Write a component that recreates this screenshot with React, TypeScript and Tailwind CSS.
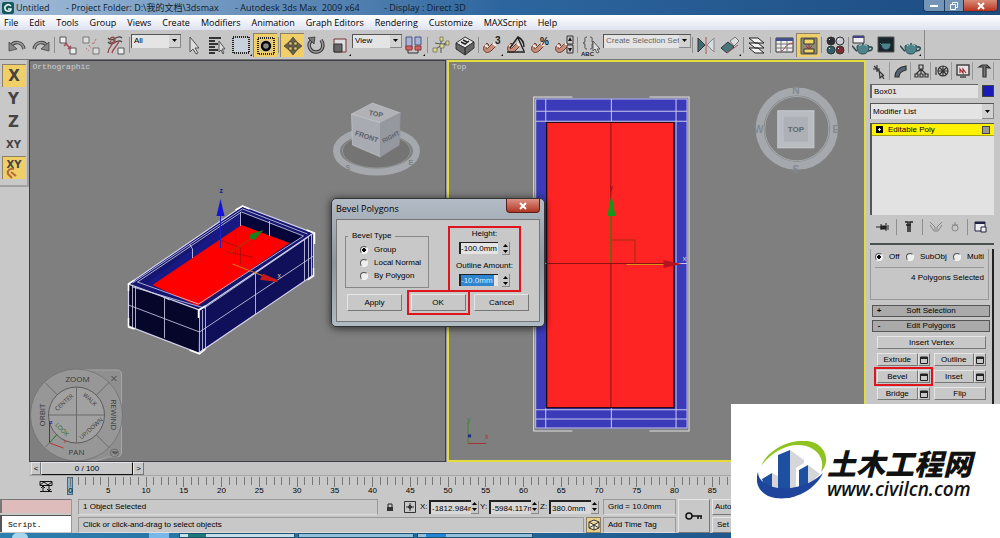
import { useState } from 'react';
import type { ReactNode } from 'react';
import { clsx } from 'clsx';

const menus = [
  'File', 'Edit', 'Tools', 'Group', 'Views', 'Create', 'Modifiers', 'Animation',
  'Graph Editors', 'Rendering', 'Customize', 'MAXScript', 'Help',
];

const Icon = ({ children }: { children: ReactNode }) => (
  <svg viewBox="0 0 24 24" className="block h-6 w-6" fill="none" stroke="#333" strokeWidth="1">
    {children}
  </svg>
);

const Flyout = () => <path d="M23 21v2h-2z" fill="#000" stroke="none" />;

const Magnet = () => (
  <>
    <path d="M5 12c-4 5 1 10 6 6l5-5-3-3-5 5c-2 2-2 0-1-1l2-2-2-2z" fill="#c98d78" stroke="#6d4436" />
    <path d="M13 10l3 3M5 12l3 2" stroke="#eee" strokeWidth="2" />
  </>
);

const Teapot = () => (
  <>
    <path d="M7 13c0 7 3 8 6 8s6-2 6-8c-3-2-9-2-12 0z" fill="#4d8389" stroke="#2b4d54" />
    <path d="M7 18c-2-1-4-5-5-5M19 14c5-1 4 4-1 4" stroke="#2b4d54" strokeWidth="1.6" />
    <path d="M9 13c2-2 6-2 8 0" stroke="#b9dde0" />
    <circle cx="13" cy="11" r="1" fill="#2b4d54" stroke="none" />
  </>
);

const icons: Record<string, ReactNode> = {
  Undo: (
    <>
      <path d="M6 13c3-5 11-5 13 3" stroke="#444" strokeWidth="3.5" />
      <path d="M6 13c3-5 11-5 13 3" stroke="#999" strokeWidth="1.6" />
      <path d="M4 9v9l8-2z" fill="#888" stroke="#444" strokeWidth=".8" />
    </>
  ),
  Redo: (
    <>
      <path d="M18 13c-3-5-11-5-13 3" stroke="#444" strokeWidth="3.5" />
      <path d="M18 13c-3-5-11-5-13 3" stroke="#999" strokeWidth="1.6" />
      <path d="M20 9v9l-8-2z" fill="#888" stroke="#444" strokeWidth=".8" />
    </>
  ),
  'Select and Link': (
    <>
      <path d="M4 4h6v6H4zM14 15h6v6h-6z" fill="#eee" stroke="#555" />
      <path d="M9 10l6 6M8 13l3-3M12 16l3-3" stroke="#a0505c" strokeWidth="1.6" />
    </>
  ),
  'Unlink Selection': (
    <>
      <path d="M3 4h6v6H3zM13 15h6v6h-6z" fill="#ddd" stroke="#777" />
      <path d="M9 12l2 3M12 10l3 1M16 6l-2 4M6 15l3 3" stroke="#b77" strokeDasharray="2 1" />
    </>
  ),
  'Bind to Space Warp': (
    <>
      <path d="M4 5c5 6 9-5 14 0M4 9c5 6 9-5 14 0" stroke="#444" strokeWidth="1.2" />
      <path d="M4 20c0-6 5-7 6-13M8 20c1-5 5-6 7-12M6 6c2-3 5-2 5 1s-4 4-5 1" stroke="#9a4c50" strokeWidth="1.4" />
      <path d="M14 15h6v6h-6z" fill="#eee" stroke="#555" />
    </>
  ),
  'Select Object': <path d="M9 4v15l3-3 3 5 2-1-3-5h4z" fill="#ddd" stroke="#555" />,
  'Select by Name': (
    <>
      <path d="M4 5h12M4 8h6M4 11h9M4 14h6M4 17h9M4 20h6" stroke="#333" strokeWidth="2" />
      <path d="M14 8v11l2-2 2 4 1-1-2-4h3z" fill="#ddd" stroke="#555" />
    </>
  ),
  'Rectangular Selection Region': (
    <>
      <path d="M5 5h14v14H5z" fill="#c9d1dc" stroke="none" />
      <path d="M4 4h16v16H4z" stroke="#222" strokeWidth="2" strokeDasharray="1 1" />
      <Flyout />
    </>
  ),
  'Window Crossing': (
    <>
      <path d="M4 4h16v16H4z" stroke="#222" strokeWidth="2" strokeDasharray="1 1" />
      <path d="M6 6h12v12H6z" fill="#d9c68d" stroke="none" />
      <circle cx="12" cy="12" r="4" fill="#888" stroke="#000" strokeWidth="2.4" />
    </>
  ),
  'Select and Move': (
    <path d="M12 3l4 5h-3v3h3V8l5 4-5 4v-3h-3v3h3l-4 5-4-5h3v-3H8v3l-5-4 5-4v3h3V8H8z" fill="#6c6048" stroke="#333" strokeWidth=".6" />
  ),
  'Select and Rotate': (
    <>
      <path d="M7 8c-4 4-1 11 5 11s9-6 5-12" stroke="#333" strokeWidth="3.5" />
      <path d="M7 8c-4 4-1 11 5 11s9-6 5-12" stroke="#999" strokeWidth="1.6" />
      <path d="M4 5l7-1-1 7z" fill="#777" stroke="#333" strokeWidth=".8" />
    </>
  ),
  'Select and Scale': (
    <>
      <path d="M6 6h12v13H6z" fill="#ddd" stroke="#733" />
      <path d="M6 11h8v8H6z" fill="#666" stroke="#333" />
      <Flyout />
    </>
  ),
  'Use Pivot Point Center': (
    <>
      <path d="M4 4h6v12H4zM13 4h6v8h-6z" fill="#aab4d0" stroke="#44548c" />
      <path d="M4 13h6v4H4zM13 13h6v4h-6z" fill="#c66" stroke="#933" />
      <path d="M6 17v3h10v-3" />
      <Flyout />
    </>
  ),
  'Select and Manipulate': (
    <>
      <path d="M12 4v16M5 17l13-8M6 10l11 2" stroke="#555" />
      <path d="M11 4h3v4h-3zM4 15h4v4H4zM11 11h4v4h-4zM17 8h3v4h-3z" fill="#ded98a" stroke="#554" strokeWidth=".6" />
    </>
  ),
  'Keyboard Shortcut Override': (
    <>
      <path d="M3 10l9-6 9 5-9 6z" fill="#e8e8e8" />
      <path d="M3 10l9 5v7l-9-6zM21 9l-9 6v7l9-7z" fill="#666" />
      <path d="M8 9l4 2 4-3M10 7l4 2" stroke="#222" strokeWidth="1.5" />
    </>
  ),
  'Snaps Toggle': (
    <>
      <Magnet />
      <text x="15" y="11" className="font-['Liberation_Sans'] text-[10px] font-bold" fill="#222" stroke="none">3</text>
      <Flyout />
    </>
  ),
  'Angle Snap': (
    <>
      <Magnet />
      <path d="M3 19h18M14 5l6 13M6 15l8-11c4 2 6 6 6 10" stroke="#222" strokeWidth="1.4" />
    </>
  ),
  'Percent Snap': (
    <>
      <Magnet />
      <text x="12" y="12" className="font-['Liberation_Sans'] text-[10px] font-bold" fill="#222" stroke="none">%</text>
    </>
  ),
  'Spinner Snap': (
    <>
      <Magnet />
      <path d="M15 3h6v8h-6zM15 12h6v8h-6z" fill="#ccc" />
      <path d="M18 4l2 4h-4zM18 19l2-4h-4z" fill="#111" stroke="none" />
    </>
  ),
  'Edit Named Selection Sets': (
    <>
      <path d="M8 4c-3 0-2 2-2 4s-2 2-2 2 2 0 2 2-1 4 2 4M11 4c3 0 2 2 2 4s2 2 2 2-2 0-2 2 1 4-2 4" stroke="#444" />
      <text x="2" y="23" className="font-['Liberation_Sans'] text-[6px] font-bold" fill="#222" stroke="none">ABC</text>
      <path d="M14 8v10l2-2 2 4 2-1-2-3h3z" fill="#ddd" stroke="#555" />
    </>
  ),
  Mirror: (
    <>
      <path d="M4 5v14l7-7z" fill="#3e6e74" />
      <path d="M20 5v14l-7-7z" fill="#d5dde2" stroke="#888" />
      <path d="M12 4v17" stroke="#a55" />
    </>
  ),
  Align: (
    <>
      <path d="M3 15l7-6 6 5-7 6z" fill="#47777d" />
      <path d="M12 8l5-4 4 4-5 5z" fill="#ddd" stroke="#777" />
      <path d="M9 20l11-8" stroke="#a55" />
      <Flyout />
    </>
  ),
  'Layer Manager': (
    <path d="M4 15h9l6 5h-9zM4 10h9l6 5h-9zM4 5h9l6 5h-9z" fill="#f2f2f2" stroke="#222" />
  ),
  'Curve Editor': (
    <>
      <path d="M4 5h17v14H4z" fill="#eee" />
      <path d="M4 5h17v3H4z" fill="#44508c" stroke="none" />
      <path d="M4 11h17M4 15h17M9 8v11M15 8v11" stroke="#777" />
      <path d="M9 18c4 0 4-8 12-8" stroke="#a44" />
    </>
  ),
  'Schematic View': (
    <>
      <path d="M4 4h16v16H4z" fill="#8b8978" stroke="#555" />
      <path d="M7 5h10v5H7zM7 15h10v4H7z" fill="#f1d565" />
      <path d="M12 10v4M9 12l3 3 3-3" stroke="#933" />
    </>
  ),
  'Material Editor': (
    <>
      <circle cx="8" cy="8" r="4" fill="#2c2c34" />
      <circle cx="17" cy="8" r="4" fill="#c6ccd2" />
      <circle cx="8" cy="17" r="4" fill="#31606a" />
      <circle cx="17" cy="17" r="4" fill="#7c2d31" />
      <path d="M6 7l1-1M15 7l1-1M6 16l1-1M15 16l1-1" stroke="#fff" />
    </>
  ),
  'Render Setup': (
    <>
      <Teapot />
      <path d="M3 3h11v7H3z" fill="#eee" />
      <path d="M3 3h11v2H3z" fill="#45418e" stroke="none" />
    </>
  ),
  'Rendered Frame Window': (
    <>
      <path d="M4 4h16v15H4z" fill="#17252c" stroke="#555" />
      <path d="M8 11c0 4 2 5 4 5s4-1 4-5zM6 10l2 2" fill="#4d8389" stroke="#4d8389" />
    </>
  ),
  'Render Production': (
    <>
      <Teapot />
      <Flyout />
    </>
  ),
};

const Tool = ({ name, active }: { name: string; active?: boolean }) => (
  <button
    aria-label={name}
    className={clsx('h-6 w-6 shrink-0', active && 'border-l border-t border-[#8c8166] bg-[#f0cf68]')}
  >
    <Icon>{icons[name]}</Icon>
  </button>
);

const Sep = () => <div className="mx-px h-4 w-px shrink-0 bg-[#8e8e8e]" />;

const Dropdown = ({ label, value, className }: { label: string; value: string; className: string }) => (
  <div className={clsx('relative shrink-0 border-l border-t border-[#555] bg-[#e4e4e4]', className)}>
    <select aria-label={label} className="block h-full w-full appearance-none pl-0.5 leading-none outline-none">
      <option>{value}</option>
    </select>
    <span className="pointer-events-none absolute inset-y-0 right-0 flex w-3 items-center justify-center border-b border-r border-[#888] bg-[#d2d2d2]">
      <svg viewBox="0 0 5 3" className="h-[3px] w-[5px]"><path d="M0 0h5L2.500 3z" /></svg>
    </span>
  </div>
);

const Spinner = ({ label }: { label: string }) => (
  <span className="flex w-2 shrink-0 flex-col border-b border-r border-[#888]">
    <button aria-label={`Increase ${label}`} className="flex h-1.5 items-center justify-center">
      <svg viewBox="0 0 5 3" className="h-[3px] w-[5px]"><path d="M0 3h5L2.500 0z" /></svg>
    </button>
    <button aria-label={`Decrease ${label}`} className="flex h-1.5 items-center justify-center">
      <svg viewBox="0 0 5 3" className="h-[3px] w-[5px]"><path d="M0 0h5L2.500 3z" /></svg>
    </button>
  </span>
);

const Radio = ({ name, label, checked, onChange }: { name: string; label: string; checked: boolean; onChange: () => void }) => (
  <label className="flex items-center gap-1.5 whitespace-nowrap">
    <input
      type="radio"
      name={name}
      checked={checked}
      onChange={onChange}
      className="h-2 w-2 shrink-0 appearance-none rounded-full border border-[#f4f4f4] border-l-[#555] border-t-[#555] bg-[#eee] checked:bg-radial checked:from-black checked:from-40% checked:to-[#eee] checked:to-50%"
    />
    {label}
  </label>
);

const PushButton = ({ children, className }: { children: ReactNode; className?: string }) => (
  <button className={clsx('border border-[#e6e6e6] border-b-[#777] border-r-[#777] bg-[#c8c8c8] text-center', className)}>
    {children}
  </button>
);

const TitleBar = () => (
  <header className="flex h-[15px] shrink-0 items-center bg-linear-to-r from-[#a3bdd8] via-[#2d669e] via-50% to-[#1c4c82] font-['Open_Sans','Noto_Sans_CJK_SC',sans-serif] text-[9px] text-[#10202e]">
    <svg viewBox="0 0 12 12" className="ml-0.5 h-3 w-3">
      <rect width="12" height="12" rx="2" fill="#17565a" />
      <path d="M9 4C6 1 2 4 3 7s6 3 6 0H6" fill="none" stroke="#e4f4f2" strokeWidth="1.6" />
    </svg>
    <h1 className="flex grow items-center whitespace-pre">
      <span className="ml-0.5 w-[50px]">Untitled</span>
      <span className="w-[169px]">- Project Folder: D:\我的文档\3dsmax</span>
      <span className="w-[149px]">- Autodesk 3ds Max  2009 x64</span>
      <span>- Display : Direct 3D</span>
    </h1>
    <div className="mr-0.5 flex h-3 self-start overflow-hidden rounded-b-sm border border-t-0 border-[#1b3a5c] text-white">
      <button aria-label="Minimize" className="flex w-[21px] items-center justify-center border-r border-[#1b3a5c] bg-[#7595b7]">
        <span className="h-0.5 w-2 bg-white" />
      </button>
      <button aria-label="Restore" className="flex w-[19px] items-center justify-center border-r border-[#1b3a5c] bg-[#7595b7]">
        <svg viewBox="0 0 8 8" className="h-2 w-2" fill="none" stroke="#fff"><path d="M.5 2.500h5v5h-5zM2.500 2V.5h5v5H6" /></svg>
      </button>
      <button aria-label="Close" className="flex w-[33px] items-center justify-center bg-linear-to-b from-[#d98a78] to-[#b5301b]">
        <svg viewBox="0 0 8 8" className="h-2 w-2" stroke="#fff" strokeWidth="2"><path d="M1 1l6 6M7 1L1 7" /></svg>
      </button>
    </div>
  </header>
);

const MainToolbar = () => (
  <div className="flex h-[30px] shrink-0 items-center border-b border-[#777] bg-[#c6c6c6] pl-[5px]">
    <Tool name="Undo" />
    <Tool name="Redo" />
    <Sep />
    <Tool name="Select and Link" />
    <Tool name="Unlink Selection" />
    <Tool name="Bind to Space Warp" />
    <Sep />
    <Dropdown label="Selection filter" value="All" className="mb-2 h-[14px] w-[50px]" />
    <Tool name="Select Object" />
    <Tool name="Select by Name" />
    <Tool name="Rectangular Selection Region" />
    <Tool name="Window Crossing" active />
    <Sep />
    <Tool name="Select and Move" active />
    <Tool name="Select and Rotate" />
    <Tool name="Select and Scale" />
    <Dropdown label="Reference coordinate system" value="View" className="mb-2 h-[14px] w-[50px]" />
    <Tool name="Use Pivot Point Center" />
    <Sep />
    <Tool name="Select and Manipulate" />
    <Tool name="Keyboard Shortcut Override" />
    <Sep />
    <Tool name="Snaps Toggle" />
    <Tool name="Angle Snap" />
    <Tool name="Percent Snap" />
    <Tool name="Spinner Snap" />
    <Sep />
    <Tool name="Edit Named Selection Sets" />
    <Dropdown label="Named selection sets" value="Create Selection Set" className="mb-2 h-[14px] w-[88px] text-[#666]" />
    <Sep />
    <Tool name="Mirror" />
    <Tool name="Align" />
    <Sep />
    <Tool name="Layer Manager" />
    <Sep />
    <Tool name="Curve Editor" />
    <Tool name="Schematic View" active />
    <Sep />
    <Tool name="Material Editor" />
    <Sep />
    <Tool name="Render Setup" />
    <Tool name="Rendered Frame Window" />
    <Tool name="Render Production" />
    <div className="ml-0.5 h-full w-px bg-[#888]" />
  </div>
);

const AxisToolbar = () => (
  <aside className="w-[29px] shrink-0 bg-[#c8c8c8]">
    <div className="flex flex-col items-center gap-px border-b-2 border-r-2 border-[#a2a2a2] pb-1.5 pt-1 font-['DejaVu_Sans'] font-bold text-[#444]">
      <button className="h-[23px] w-6 border-l border-t border-[#8c8166] bg-[#f0cf68] text-[15px] leading-none">X</button>
      <button className="h-[22px] w-6 text-[15px] leading-none">Y</button>
      <button className="h-[22px] w-6 text-[15px] leading-none">Z</button>
      <button className="h-[21px] w-6 text-[10px] leading-none">XY</button>
      <button className="relative h-[23px] w-6 border-l border-t border-[#8c8166] bg-[#f0cf68] pb-1.5 text-[10px] leading-none">
        XY
        <svg viewBox="0 0 12 12" className="absolute bottom-0 left-0.5 h-3 w-3">
          <path d="M9 2C4 1 2 4 3 7l4 4M6 5l5 4" fill="none" stroke="#b06a3c" strokeWidth="2" />
        </svg>
      </button>
    </div>
  </aside>
);

// Tray seen from the front left, with the view cube and the steering wheel around it
const OrthoScene = () => (
  <svg viewBox="30 61 416 400" preserveAspectRatio="xMidYMid slice" className="block h-full w-full" fill="none">
    <text x="33" y="69" fill="#cfcfcf" className="font-['Liberation_Mono'] text-[8px]">Orthographic</text>

    <path d="M129 284L200 310 199 353 129 326z" fill="#06062a" />
    <path d="M200 310L314 233V275L199 353z" fill="#10105a" />
    <path d="M129 284L243 206 314 233 200 310z" fill="#161670" />
    <path d="M147 284L241 212V226L154 286z" fill="#191984" />
    <path d="M241 212L304 236 290 244 241 226z" fill="#05053a" />
    <path d="M153 285L242 225 290 243 198 306z" fill="#fe0000" />
    <g stroke="#d4d4ee" strokeWidth=".8">
      <path d="M129 284L243 206 314 233 200 310zM129 284V326L199 353 314 275V233" strokeWidth="1.2" />
      <path d="M133 283L243 209 308 234M138 282L242 212 304 236 199 304zM133 287L205 308 309 237" />
      <path d="M129 305L200 332 314 256M165 298V338M256 273V314M133 286V328M136 287V329" />
      <path d="M200 310V353M203 310V350M206 307V348M305 239V281M309 236V278M312 235V276" />
      <path d="M241 212V226M190 244L193 249V258M270 221V236M162 296L170 300" />
    </g>
    <path d="M129 291V284L135 280M129 318V327L135 329M190 350L200 354 206 349M314 268V276L308 280M236 210L243 206 250 209M307 230L315 233V244M199 318V310L206 306" stroke="#fff" strokeWidth="1.500" />
    <path d="M221 240L241 248V264M228 252L253 257M236 262V228" stroke="#a01010" strokeWidth=".8" />
    <path d="M221 248V214" stroke="#2020c8" />
    <path d="M221 199L217 216H225z" fill="#1414d8" />
    <text x="220" y="193" fill="#1a1a90" className="font-['Liberation_Sans'] text-[7px] font-bold">z</text>
    <path d="M230 253L254 237" stroke="#a04010" />
    <path d="M264 230L251 234 250 238 255 240z" fill="#18801c" />
    <path d="M233 264L264 276" stroke="#e07818" />
    <path d="M278 281L264 275 262 279z" fill="#c81818" stroke="#c81818" strokeWidth="2" />
    <text x="278" y="278" fill="#ccc" className="font-['Liberation_Sans'] text-[7px]">x</text>

    <ellipse cx="377" cy="151" rx="40" ry="21" stroke="#a5a9ad" strokeWidth="7" />
    <ellipse cx="377" cy="151" rx="34" ry="17" fill="#747474" stroke="#9a9a9a" strokeWidth=".8" />
    <path d="M352 114L373 103 401 113 381 123z" fill="#b0b2b8" stroke="#c8cad0" strokeWidth=".6" />
    <path d="M352 114L381 123V157L353 145z" fill="#a9abb2" stroke="#c8cad0" strokeWidth=".6" />
    <path d="M381 123L401 113 400 145 381 157z" fill="#9698a0" stroke="#8a8c94" strokeWidth=".6" />
    <g fill="#5c6068" className="font-['Liberation_Sans'] text-[7px] font-bold">
      <text transform="translate(369 115) rotate(10)">TOP</text>
      <text transform="translate(355 135) rotate(18)">FRONT</text>
      <text transform="translate(384 143) rotate(-28)" className="text-[6px]">RIGHT</text>
      <text x="346" y="170" fill="#7c8288">S</text>
      <text x="409" y="165" fill="#7c8288">E</text>
    </g>

    <path d="M77 370H118Q122 370 122 375V452Q122 457 117 457H109Q94 463 77 461A46 46 0 0 1 77 370z" fill="#8f8f8f" stroke="#a6a6a6" />
    <circle cx="77" cy="415" r="46" fill="#979797" stroke="#666" strokeWidth=".6" />
    <circle cx="77" cy="415" r="28" fill="#a1a1a1" stroke="#5c5c5c" />
    <path d="M77 387V443M49 415H105M46 383L58 395M110 382L97 395M110 448L97 435M46 447L57 435" stroke="#6a6a6a" />
    <path d="M112 376l5 5M117 376l-5 5M113 452h5l-2 2z" stroke="#333" strokeWidth=".8" />
    <circle cx="115" cy="453" r="4" stroke="#555" strokeWidth=".6" />
    <g fill="#383838" className="font-['Open_Sans'] text-[8px]" textAnchor="middle">
      <text x="78" y="382">ZOOM</text>
      <text x="77" y="455">PAN</text>
      <text transform="translate(45 415) rotate(-90)">ORBIT</text>
      <text transform="translate(111 415) rotate(90)">REWIND</text>
      <text transform="translate(66 404) rotate(-42)" className="text-[6px]">CENTER</text>
      <text transform="translate(89 401) rotate(42)" className="text-[6px]">WALK</text>
      <text transform="translate(61 431) rotate(45)" fill="#1d6a20" className="text-[6px]">LOOK</text>
      <text transform="translate(93 430) rotate(-42)" className="text-[6px]">UP/DOWN</text>
    </g>
    <path d="M50 443V421" stroke="#3434b0" />
    <path d="M50 443L58 434" stroke="#2c8a2c" />
    <path d="M50 443L64 448" stroke="#b83434" />
    <text x="50" y="424" fill="#2424a0" className="font-['Liberation_Sans'] text-[6px] font-bold">z</text>
    <text x="64" y="443" fill="#b83434" className="font-['Liberation_Sans'] text-[6px]">x</text>
  </svg>
);

const TopScene = () => (
  <svg viewBox="450 62 414 398" preserveAspectRatio="xMidYMid slice" className="block h-full w-full" fill="none">
    <text x="453" y="69" fill="#cfcfcf" className="font-['Liberation_Mono'] text-[8px]">Top</text>

    <path d="M536 99H688V428H536z" fill="#3b3bba" />
    <path d="M547.500 122.500H674.500V407.500H547.500z" fill="#ff2424" stroke="#000" />
    <path d="M536.500 99.500H687.500V427.500H536.500zM536 111.500H688M536 121.500H688M536 409.500H688M536 418.500H688M546.500 99V122M546.500 408V428M676.500 99V428M612 99V122M612 408V428M536 263.500H547M676 263.500H688" stroke="#c8c8ec" />
    <path d="M573 97.500H534.500V430.500H573M650 97.500H689.500V430.500H650" stroke="#e2e2e2" />
    <path d="M611.500 123V407M548 263.500H674" stroke="#8e1014" />
    <path d="M611.500 240H635.500V263" stroke="#a02a10" />
    <path d="M611.500 263V215" stroke="#5a8a14" />
    <path d="M612 195L608 216H616z" fill="#0e9a18" />
    <text x="610" y="190" fill="#8e1014" className="font-['Liberation_Sans'] text-[7px]">y</text>
    <path d="M627 264.500H665" stroke="#e09018" />
    <path d="M682 264L664 260V268z" fill="#b81420" />
    <text x="683" y="261" fill="#ccc" className="font-['Liberation_Sans'] text-[8px]">x</text>

    <circle cx="797" cy="129" r="37" stroke="#a5a9ad" strokeWidth="8" />
    <circle cx="797" cy="129" r="32" stroke="#a5a9ad" />
    <path d="M778 111H814V148H778z" fill="#b9bcc0" stroke="#c9ccd0" />
    <path d="M784 117H808V142H784z" fill="#adb0b4" />
    <g className="font-['Liberation_Sans'] text-[10px] font-bold" fill="#84888e" textAnchor="middle">
      <text x="796" y="94">N</text>
      <text x="796" y="173">S</text>
      <text x="759" y="133">W</text>
      <text x="836" y="133">E</text>
      <text x="796" y="132" fill="#62666c" className="text-[8px]">TOP</text>
    </g>

    <path d="M469 443V422" stroke="#3a8a3a" />
    <path d="M469 443H487" stroke="#a03434" />
    <path d="M469 434h3v3h-3z" fill="#1c2c80" />
    <text x="468" y="422" fill="#2c8a2c" className="font-['Liberation_Sans'] text-[7px]">y</text>
    <text x="486" y="439" fill="#a83434" className="font-['Liberation_Sans'] text-[7px]">x</text>
  </svg>
);

const TimeSlider = () => (
  <div className="flex h-[14px] shrink-0 border-b border-[#a8a8a8] bg-[#c4c4c4] pl-0.5">
    <PushButton className="w-[10px] leading-none">&lt;</PushButton>
    <button className="w-[92px] border border-[#e6e6e6] border-b-[#111] border-r-[#111] bg-[#c8c8c8] leading-none">0 / 100</button>
    <PushButton className="w-[11px] leading-none">&gt;</PushButton>
  </div>
);

const TrackBar = () => (
  <div className="flex h-[21px] shrink-0 bg-[#c8c8c8] pr-[41px]">
    <div className="flex w-[38px] shrink-0 items-center pl-2.5">
      <button aria-label="Open mini curve editor">
        <svg viewBox="0 0 14 13" className="h-[13px] w-[14px]" fill="none" stroke="#111">
          <path d="M1 1.500h12v4H1zM1 5l4-3 4 3 4-3M1 11.500h12M4 6v5M10 6v5M2 8l2-2 2 2M8 9l2 2 2-2" />
        </svg>
      </button>
    </div>
    <div className="flex grow">
      <div className="-mr-[3px] mt-px h-[18px] w-[6px] shrink-0 border border-[#3e6a85] bg-[#86b1ca]" />
      {Array.from({ length: 20 }, (_, i) => (
        <div key={i} className="flex grow basis-0 flex-col pt-px">
          <div className="flex h-2.5">
            {[0, 1, 2, 3, 4].map((t) => (
              <div key={t} className={clsx('grow basis-0 border-l border-[#777]', t === 0 ? 'h-2.5' : 'h-2')} />
            ))}
          </div>
          <div className="-mt-px flex w-px justify-center leading-[10px]">{i * 5}</div>
        </div>
      ))}
    </div>
  </div>
);

const tabIcons: [string, string][] = [
  ['Create', 'M3 3l10 10M6 2v7M2 6h7M8 7l1 8 2-2 2 3'],
  ['Modify', 'M3 14c0-7 4-10 11-11v4c-5 1-7 3-7 7z'],
  ['Hierarchy', 'M6 2h4v4H6zM2 11h3v3H2zM7 11h3v3H7zM12 11h3v3h-3zM8 6v5M3 11l5-5 5 5'],
  ['Motion', 'M2 4v8M14 8a5 5 0 1 1-10 0 5 5 0 0 1 10 0M6 5l6 6M12 5l-6 6M9 3v10M4 8h10'],
  ['Display', 'M5 10V6l3 4V6l3 4'],
  ['Utilities', 'M3 4l3-2h5l3 3h-2l-2-1v10H7V4z'],
];

const EditButton = ({ name, settings = true, marked }: { name: string; settings?: boolean; marked?: boolean }) => (
  <div className={clsx('flex h-[13px]', marked && 'outline-2 outline-offset-1 outline-[#e0141c]')}>
    <PushButton className="grow leading-none">{name}</PushButton>
    {settings && (
      <PushButton className="flex w-3 items-center justify-center">
        <svg viewBox="0 0 8 8" role="img" aria-label={`${name} settings`} className="h-2 w-2">
          <path d="M.5 1h7v6.500h-7z" fill="none" stroke="#222" />
          <path d="M0 1h8v2H0z" fill="#222" />
        </svg>
      </PushButton>
    )}
  </div>
);

const CommandPanel = () => {
  const [preview, setPreview] = useState('Off');

  return (
    <aside className="flex w-[134px] shrink-0 flex-col bg-[#c6c6c6] pl-1 pr-1.5">
      <div className="flex h-5 items-end gap-px">
        {tabIcons.map(([name, d]) => (
          <button key={name} aria-label={name} className="flex h-[18px] grow items-center justify-center border-r border-[#999]">
            <svg viewBox="0 0 16 16" className="h-4 w-4" fill={name === 'Modify' ? '#567' : name === 'Utilities' ? '#777' : 'none'} stroke={name === 'Display' ? '#a82a34' : '#333'} strokeWidth="1.200">
              {name === 'Display' && <path d="M2 2h12v10H2zM5 14h6" fill="#e4e4e4" stroke="#444" strokeWidth="1.500" />}
              <path d={d} />
            </svg>
          </button>
        ))}
      </div>
      <div className="mt-1 flex items-center gap-1">
        <input aria-label="Object name" defaultValue="Box01" className="h-[14px] w-0 grow border-l-2 border-t border-[#666] bg-[#e2e2e2] px-0.5" />
        <button aria-label="Object color" className="h-3 w-3 border border-[#444] bg-[#1a1ab4]" />
      </div>
      <Dropdown label="Modifier List" value="Modifier List" className="mt-[5px] h-4 w-full" />
      <ul className="mt-1 h-[92px] border-l-2 border-t border-[#555] bg-[#e2e2e2]">
        <li className="flex h-3 items-center border-b border-[#a8a400] bg-[#fff200] px-1">
          <svg viewBox="0 0 7 7" className="mr-[5px] h-[7px] w-[7px]"><path d="M0 0h7v7H0z" /><path d="M2 3.500h3M3.500 2v3" stroke="#fff" /></svg>
          <span className="grow">Editable Poly</span>
          <span className="h-2 w-2 border border-[#444] bg-[#999]" />
        </li>
      </ul>
      <div className="mt-0.5 flex h-5 items-center justify-between px-1.5">
        <svg viewBox="0 0 14 12" className="h-3 w-3.5" stroke="#222" fill="#222"><path d="M0 6h5M5 3v6M5 5h5v3H5zM10 2v8M12 4v5" /></svg>
        <Sep />
        <svg viewBox="0 0 14 12" className="h-3 w-3.5" stroke="#222" fill="none"><path d="M3 1h3v10M4 4h5M11 1H8v10" strokeWidth="1.500" /></svg>
        <Sep />
        <svg viewBox="0 0 14 12" className="h-3 w-3.5" stroke="#888" fill="none"><path d="M1 1l5 5v5M13 1L8 6v5M1 4l4 6M13 4l-4 6" /></svg>
        <svg viewBox="0 0 14 12" className="h-3 w-3.5" stroke="#888" fill="none"><path d="M4 7a3 3 0 1 0 6 0 3 3 0 1 0-6 0M4 4h6M7 1v3" /></svg>
        <Sep />
        <svg viewBox="0 0 14 12" className="h-3 w-3.5" stroke="#224" fill="#eee"><path d="M1 1h10v9H1z" /><path d="M1 2h10" strokeWidth="2" /><path d="M7 6h5v5H7z" /></svg>
      </div>
      <hr className="mt-[6px] border-t-2 border-[#48504c]" />
      <div className="mt-1 flex grow gap-0.5">
        <div className="flex grow flex-col">
          <div className="mr-px flex h-[51px] flex-col items-end border border-t-0 border-[#999] px-1">
            <div className="flex w-full justify-between border-b border-[#999] pb-1 pt-0.5">
              <Radio name="preview" label="Off" checked={preview === 'Off'} onChange={() => setPreview('Off')} />
              <Radio name="preview" label="SubObj" checked={preview === 'SubObj'} onChange={() => setPreview('SubObj')} />
              <Radio name="preview" label="Multi" checked={preview === 'Multi'} onChange={() => setPreview('Multi')} />
            </div>
            <p className="mt-1">4 Polygons Selected</p>
          </div>
          <button className="ml-0.5 mt-[5px] flex h-3 items-center border border-[#555] bg-[#aaa]">
            <span className="w-3 font-bold">+</span>
            <span className="grow pr-3">Soft Selection</span>
          </button>
          <button className="ml-0.5 mt-[3px] flex h-3 items-center border border-[#555] bg-[#aaa]">
            <span className="w-3 font-bold">-</span>
            <span className="grow pr-3">Edit Polygons</span>
          </button>
          <div className="ml-[7px] mt-1 flex flex-col gap-1 pr-1">
            <PushButton className="h-[13px] leading-none">Insert Vertex</PushButton>
            <div className="grid grid-cols-2 gap-1">
              <EditButton name="Extrude" />
              <EditButton name="Outline" />
              <EditButton name="Bevel" marked />
              <EditButton name="Inset" />
              <EditButton name="Bridge" />
              <EditButton name="Flip" settings={false} />
            </div>
          </div>
        </div>
        <div className="w-0.5 bg-[#222]" />
      </div>
    </aside>
  );
};

const Coordinate = ({ axis, value }: { axis: string; value: string }) => (
  <label className="flex shrink-0 items-center">
    <span className="w-[9px]">{axis}:</span>
    <input defaultValue={value} className="h-[14px] w-[42px] border-l-2 border-t-2 border-[#222] bg-[#d8d8d8] pl-px" />
    <Spinner label={axis} />
  </label>
);

const StatusBar = () => (
  <footer className="flex h-9 shrink-0 gap-1.5 bg-[#c8c8c8] pt-0.5">
    <div className="flex w-[72px] shrink-0 flex-col gap-0.5 border-r border-[#999]">
      <div className="h-[14px] border-l-2 border-t border-[#777] bg-[#dfbcbc]" />
      <input
        aria-label="MAXScript listener"
        defaultValue="Script."
        className="h-[17px] w-full border-l-2 border-t border-[#555] bg-white pl-1.5 font-['Liberation_Mono'] text-[8px]"
      />
    </div>
    <div className="flex w-[598px] shrink-0 flex-col gap-0.5">
      <div className="flex h-4 items-center gap-0.5">
        <p className="h-full grow border border-[#999] border-b-[#ddd] pl-1 leading-[14px]">1 Object Selected</p>
        <button aria-label="Selection lock" className="flex w-5 justify-center">
          <svg viewBox="0 0 8 10" className="h-2.5 w-2"><path d="M2 5V2h4v3" fill="none" stroke="#222" /><path d="M1 5h6v4H1z" fill="#333" /></svg>
        </button>
        <button aria-label="Absolute mode" className="flex w-4 justify-center">
          <svg viewBox="0 0 12 12" className="h-3 w-3" fill="none" stroke="#333"><path d="M.5.5h11v11H.5zM6 2v8M2 6h8" /><circle cx="6" cy="6" r="1.500" fill="#333" /></svg>
        </button>
        <div className="flex gap-px">
          <Coordinate axis="X" value="-1812.984mm" />
          <Coordinate axis="Y" value="-5984.117mm" />
          <Coordinate axis="Z" value="380.0mm" />
        </div>
        <p className="ml-0.5 h-full w-[73px] border border-[#999] border-b-[#ddd] pl-1 leading-[14px]">Grid = 10.0mm</p>
      </div>
      <div className="flex h-4 items-center gap-0.5">
        <p className="h-full grow border border-[#999] border-b-[#ddd] pl-1 leading-[14px]">Click or click-and-drag to select objects</p>
        <button aria-label="Adaptive degradation" className="flex h-4 w-[15px] items-center justify-center border border-[#8c8166] bg-[#e8cf86]">
          <svg viewBox="0 0 12 12" className="h-3 w-3" fill="#f4ecd0" stroke="#333"><path d="M6 1l5 2v6l-5 2-5-2V3zM1 3l5 3 5-3M6 6v5M1 9l5-3 5 3" /></svg>
        </button>
        <button className="h-full w-[73px] border border-[#999] border-b-[#ddd] pl-1 text-left leading-[14px]">Add Time Tag</button>
      </div>
    </div>
    <PushButton className="-ml-1 flex w-8 shrink-0 items-center justify-center">
      <svg viewBox="0 0 18 8" role="img" aria-label="Set keys" className="h-2 w-[18px]" fill="none" stroke="#111" strokeWidth="1.500">
        <circle cx="4" cy="4" r="3" /><path d="M7 4h10M13 4v3M16 4v3" />
      </svg>
    </PushButton>
    <div className="-ml-1 flex grow flex-col gap-0.5">
      <PushButton className="h-4 w-12 pl-0.5 text-left leading-none">Auto Key</PushButton>
      <PushButton className="h-4 w-12 pl-1 text-left leading-none">Set Key</PushButton>
    </div>
  </footer>
);

const BevelDialog = () => {
  const [bevelType, setBevelType] = useState('Group');

  return (
    <section
      role="dialog"
      aria-label="Bevel Polygons"
      className="absolute left-[331px] top-[198px] w-[214px] rounded-[5px] border border-[#333] bg-linear-to-b from-[#b3bcc6] via-[#8d979f] to-[#b0bcc4] px-1 pb-1 shadow-[0_1px_8px_rgba(0,0,0,0.7)]"
    >
      <div className="flex h-5 justify-between">
        <h2 className="font-['Open_Sans'] text-[9px] leading-5">Bevel Polygons</h2>
        <button aria-label="Close" className="flex h-[14px] w-[34px] items-center justify-center rounded-b-sm border border-t-0 border-[#582018] bg-linear-to-b from-[#dc9184] to-[#b03424]">
          <svg viewBox="0 0 8 8" className="h-2 w-2" stroke="#fff" strokeWidth="2"><path d="M1 1l6 6M7 1L1 7" /></svg>
        </button>
      </div>
      <div className="border border-[#777] bg-[#c8c8c8] px-2 pb-2.5 pt-1.5">
        <div className="flex items-start justify-between pr-2.5">
          <fieldset className="mt-1 h-[58px] w-[84px] border border-[#888] pl-3.5">
            <legend className="-ml-3 px-1 leading-[12px]">Bevel Type</legend>
            <div className="flex flex-col gap-px pt-0.5 leading-[12px]">
              {['Group', 'Local Normal', 'By Polygon'].map((type) => (
                <Radio key={type} name="bevel" label={type} checked={bevelType === type} onChange={() => setBevelType(type)} />
              ))}
            </div>
          </fieldset>
          <div className="flex h-[66px] w-[73px] flex-col items-center border-2 border-[#e0141c] leading-[12px]">
            <label htmlFor="bevel-height">Height:</label>
            <span className="mt-0.5 flex gap-1">
              <input id="bevel-height" defaultValue="-100.0mm" className="h-3 w-[39px] border-l-2 border-t border-[#222] bg-[#e4e4e4]" />
              <Spinner label="height" />
            </span>
            <label htmlFor="bevel-outline" className="mt-[5px] whitespace-nowrap">Outline Amount:</label>
            <span className="mt-0.5 flex gap-1">
              <span className="flex h-3 w-[39px] border-l-2 border-t border-[#222] bg-[#e4e4e4]">
                <input id="bevel-outline" defaultValue="-10.0mm" className="h-[11px] w-[33px] bg-[#2f86d0] text-[#d9efff]" />
              </span>
              <Spinner label="outline amount" />
            </span>
          </div>
        </div>
        <div className="mt-0.5 flex justify-between pl-0.5 pr-0.5">
          <PushButton className="h-[17px] w-[55px] leading-none">Apply</PushButton>
          <PushButton className="h-[17px] w-[55px] leading-none outline-2 outline-offset-2 outline-[#e0141c]">OK</PushButton>
          <PushButton className="h-[17px] w-[55px] leading-none">Cancel</PushButton>
        </div>
      </div>
    </section>
  );
};

const SiteBadge = () => (
  <a href="#site" className="absolute bottom-0 right-0 flex h-[134px] w-[269px] items-start bg-white pl-[26px] pt-[37px] text-[#111]">
    <svg viewBox="0 0 70 60" className="h-[60px] w-[70px] shrink-0">
      <path d="M33 9L47 19V22L39 27V55L33 57zM15 32L21 35V56L15 53zM51 24L63 33 51 44z" fill="#d4d6d9" />
      <path d="M5 38L15 32V55L9 51zM21 14L33 9V57L21 57zM42 29L51 24V46L42 52z" fill="#1e50a2" />
      <path d="M4 25C13 4 44-6 60 3 72 11 71 24 64 31 68 19 62 9 49 5 34 1 16 9 4 25z" fill="#8fc31f" />
      <path d="M1 31C1 42 16 49 34 47 48 45 59 39 66 32 58 49 37 60 18 57 3 54-3 43 1 31z" fill="#1e459b" />
    </svg>
    <span className="mt-1 flex flex-col">
      <span className="font-['Noto_Sans_CJK_SC',sans-serif] text-[29px] font-black italic leading-[34px]">土木工程网</span>
      <span className="font-['Open_Sans',sans-serif] text-[19px] font-semibold italic leading-[21px]">www.civilcn.com</span>
    </span>
  </a>
);

const Taskbar = () => (
  <nav aria-label="Taskbar" className="flex h-[5px] shrink-0 gap-[3px] bg-linear-to-r from-[#2d7fae] to-[#1a4a80] pl-3">
    <span className="mr-[118px] h-full w-4 rounded-t-full bg-[#a8d4ec]" />
    <span className="mr-[7px] h-full w-5 bg-[#78b8e8]" />
    <button aria-label="3ds Max" className="flex w-[116px] justify-start border border-[#20506e] bg-[#c4dfea] pl-2"><span className="h-full w-[18px] bg-[#197a78]" /></button>
    <button aria-label="Folder" className="w-[116px] border border-[#20506e] bg-[#8fc0dc]" />
    <button aria-label="Document" className="flex w-[116px] border border-[#20506e] bg-[#94c0de] pl-2"><span className="h-full w-5 bg-[#2484d8]" /></button>
  </nav>
);

export default function App() {
  return (
    <div className="relative flex h-screen flex-col overflow-hidden bg-[#c6c6c6] font-['Liberation_Sans',sans-serif] text-[8px] leading-[12px] text-black">
      <TitleBar />
      <nav className="flex h-[15px] shrink-0 items-center gap-[11px] bg-linear-to-b from-white to-[#dfe3f0] pl-1 font-['Open_Sans'] text-[9px] font-medium">
        {menus.map((menu) => (
          <button key={menu}>{menu}</button>
        ))}
      </nav>
      <MainToolbar />
      <main className="flex min-h-0 grow">
        <AxisToolbar />
        <div className="flex min-w-0 grow flex-col">
          <div className="flex min-h-0 grow gap-px bg-[#9a9a9a]">
            <div className="min-w-0 grow basis-0 border border-[#3c3f48] bg-[#7f7f7f]"><OrthoScene /></div>
            <div className="min-w-0 grow basis-0 border-2 border-[#e2dc3c] bg-[#7f7f7f]"><TopScene /></div>
          </div>
          <TimeSlider />
          <TrackBar />
        </div>
        <CommandPanel />
      </main>
      <StatusBar />
      <Taskbar />
      <BevelDialog />
      <SiteBadge />
    </div>
  );
}
